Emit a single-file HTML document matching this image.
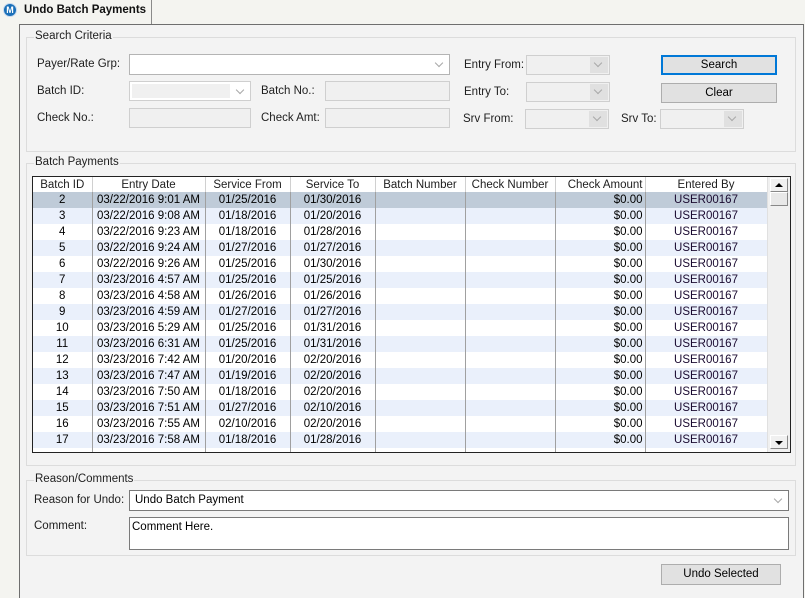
<!DOCTYPE html>
<html><head><style>
*{box-sizing:border-box;margin:0;padding:0}
body{width:805px;height:598px;background:#f4f4f0;font-family:"Liberation Sans",sans-serif;font-size:11.5px;color:#000;position:relative;overflow:hidden}
.a{position:absolute}
.panel{left:19px;top:24px;width:785px;height:574px;border:1px solid #6e6e6e;border-bottom:none;background:#f3f3f3}
.grp{border:1px solid #dcdcdc}
.gl{position:absolute;top:-8px;left:7px;background:#f3f3f3;padding:0 1px;color:#1e1e1e}
.lbl{color:#1e1e1e}
.inp{background:#fff;border:1px solid #b4b4b4}
.dis{background:#f0f0f0;border:1px solid #cfcfcf}
.dd{position:absolute;right:1px;top:1px;bottom:1px;width:18px;background:#e0e0e0}
.dd::after,.chev::after{content:"";position:absolute;left:5px;top:3px;width:5px;height:5px;border-right:1px solid #a8a8a8;border-bottom:1px solid #a8a8a8;transform:rotate(45deg)}
.chev{position:absolute;right:2px;top:2px;width:16px;height:14px}
.btn{background:#e1e1e1;border:1px solid #adadad;text-align:center;line-height:19px}
table{border-collapse:collapse;font-size:11.5px;table-layout:fixed}
td,th{height:16px;padding:1px 2px 0;border-right:1px solid #a0a0a0;white-space:nowrap;overflow:hidden;font-weight:normal;text-align:center;line-height:15px}
th{background:#fff;color:#1e1e1e;height:15px;border-right:1px solid #d0d0d0;line-height:14px}
tr.b td{background:#eaf0fb}
tr.w td{background:#fff}
tr.s td{background:#bfcbd8}
td.r{text-align:right}
td.u{color:#1a0a30}
</style></head><body>
<div class="a" style="left:0;top:0;width:152px;height:24px;background:#f4f4f0;border-right:1px solid #8a8a8a"></div>
<div class="a" style="left:3px;top:3px;width:14px;height:14px;border-radius:50%;background:#1a6fb8;border:1px solid #c7d9ee;color:#fff;font-size:9px;font-weight:bold;text-align:center;line-height:12px">M</div>
<div class="a" style="left:24px;top:4px;font-weight:bold;font-size:11.5px;color:#111">Undo Batch Payments</div>
<div class="a panel"></div>
<div class="a grp" style="left:26px;top:37px;width:770px;height:115px"><span class="gl">Search Criteria</span></div>
<div class="a lbl" style="left:37px;top:58px">Payer/Rate Grp:</div>
<div class="a inp" style="left:129px;top:54px;width:321px;height:21px"><span class="chev"></span></div>
<div class="a lbl" style="left:37px;top:85px">Batch ID:</div>
<div class="a dis" style="left:129px;top:81px;width:122px;height:20px;background:#fff"><div style="position:absolute;left:2px;top:2px;right:20px;bottom:2px;background:#f0f0f0"></div><span class="chev"></span></div>
<div class="a lbl" style="left:261px;top:85px">Batch No.:</div>
<div class="a dis" style="left:325px;top:81px;width:125px;height:20px"></div>
<div class="a lbl" style="left:37px;top:112px">Check No.:</div>
<div class="a dis" style="left:129px;top:108px;width:122px;height:20px"></div>
<div class="a lbl" style="left:261px;top:112px">Check Amt:</div>
<div class="a dis" style="left:325px;top:108px;width:125px;height:20px"></div>
<div class="a lbl" style="left:464px;top:59px">Entry From:</div>
<div class="a dis" style="left:526px;top:55px;width:84px;height:20px"><span class="dd"></span></div>
<div class="a lbl" style="left:464px;top:86px">Entry To:</div>
<div class="a dis" style="left:526px;top:82px;width:84px;height:20px"><span class="dd"></span></div>
<div class="a lbl" style="left:463px;top:113px">Srv From:</div>
<div class="a dis" style="left:525px;top:109px;width:84px;height:20px"><span class="dd"></span></div>
<div class="a lbl" style="left:621px;top:113px">Srv To:</div>
<div class="a dis" style="left:660px;top:109px;width:84px;height:20px"><span class="dd"></span></div>
<div class="a btn" style="left:661px;top:55px;width:116px;height:20px;border:2px solid #0078d7;line-height:17px">Search</div>
<div class="a btn" style="left:661px;top:83px;width:116px;height:20px">Clear</div>
<div class="a grp" style="left:26px;top:163px;width:770px;height:303px"><span class="gl">Batch Payments</span></div>
<div class="a" style="left:32px;top:176px;width:759px;height:277px;border:1px solid #222;background:#fff;overflow:hidden">
<table style="width:734px">
<colgroup><col style="width:59px"><col style="width:113px"><col style="width:85px"><col style="width:85px"><col style="width:90px"><col style="width:90px"><col style="width:90px"><col style="width:122px"></colgroup>
<tr><th>Batch ID</th><th>Entry Date</th><th>Service From</th><th>Service To</th><th>Batch Number</th><th>Check Number</th><th style="text-align:right">Check Amount</th><th>Entered By</th></tr>
<tr class="s"><td>2</td><td>03/22/2016 9:01 AM</td><td>01/25/2016</td><td>01/30/2016</td><td></td><td></td><td class="r">$0.00</td><td class="u">USER00167</td></tr>
<tr class="b"><td>3</td><td>03/22/2016 9:08 AM</td><td>01/18/2016</td><td>01/20/2016</td><td></td><td></td><td class="r">$0.00</td><td class="u">USER00167</td></tr>
<tr class="w"><td>4</td><td>03/22/2016 9:23 AM</td><td>01/18/2016</td><td>01/28/2016</td><td></td><td></td><td class="r">$0.00</td><td class="u">USER00167</td></tr>
<tr class="b"><td>5</td><td>03/22/2016 9:24 AM</td><td>01/27/2016</td><td>01/27/2016</td><td></td><td></td><td class="r">$0.00</td><td class="u">USER00167</td></tr>
<tr class="w"><td>6</td><td>03/22/2016 9:26 AM</td><td>01/25/2016</td><td>01/30/2016</td><td></td><td></td><td class="r">$0.00</td><td class="u">USER00167</td></tr>
<tr class="b"><td>7</td><td>03/23/2016 4:57 AM</td><td>01/25/2016</td><td>01/25/2016</td><td></td><td></td><td class="r">$0.00</td><td class="u">USER00167</td></tr>
<tr class="w"><td>8</td><td>03/23/2016 4:58 AM</td><td>01/26/2016</td><td>01/26/2016</td><td></td><td></td><td class="r">$0.00</td><td class="u">USER00167</td></tr>
<tr class="b"><td>9</td><td>03/23/2016 4:59 AM</td><td>01/27/2016</td><td>01/27/2016</td><td></td><td></td><td class="r">$0.00</td><td class="u">USER00167</td></tr>
<tr class="w"><td>10</td><td>03/23/2016 5:29 AM</td><td>01/25/2016</td><td>01/31/2016</td><td></td><td></td><td class="r">$0.00</td><td class="u">USER00167</td></tr>
<tr class="b"><td>11</td><td>03/23/2016 6:31 AM</td><td>01/25/2016</td><td>01/31/2016</td><td></td><td></td><td class="r">$0.00</td><td class="u">USER00167</td></tr>
<tr class="w"><td>12</td><td>03/23/2016 7:42 AM</td><td>01/20/2016</td><td>02/20/2016</td><td></td><td></td><td class="r">$0.00</td><td class="u">USER00167</td></tr>
<tr class="b"><td>13</td><td>03/23/2016 7:47 AM</td><td>01/19/2016</td><td>02/20/2016</td><td></td><td></td><td class="r">$0.00</td><td class="u">USER00167</td></tr>
<tr class="w"><td>14</td><td>03/23/2016 7:50 AM</td><td>01/18/2016</td><td>02/20/2016</td><td></td><td></td><td class="r">$0.00</td><td class="u">USER00167</td></tr>
<tr class="b"><td>15</td><td>03/23/2016 7:51 AM</td><td>01/27/2016</td><td>02/10/2016</td><td></td><td></td><td class="r">$0.00</td><td class="u">USER00167</td></tr>
<tr class="w"><td>16</td><td>03/23/2016 7:55 AM</td><td>02/10/2016</td><td>02/20/2016</td><td></td><td></td><td class="r">$0.00</td><td class="u">USER00167</td></tr>
<tr class="b"><td>17</td><td>03/23/2016 7:58 AM</td><td>01/18/2016</td><td>01/28/2016</td><td></td><td></td><td class="r">$0.00</td><td class="u">USER00167</td></tr>
<tr class="w"><td></td><td></td><td></td><td></td><td></td><td></td><td></td><td></td></tr>
</table>
<div class="a" style="left:734px;top:0;width:23px;height:275px;background:#f0f0f0;border-left:1px solid #e0e0e0">
<div class="a" style="left:2px;top:1px;width:18px;height:14px;background:#f0f0f0;border:1px solid #fff;border-right-color:#888;border-bottom-color:#888"><div style="margin:4px auto 0;width:0;height:0;border-left:4px solid transparent;border-right:4px solid transparent;border-bottom:4px solid #000"></div></div>
<div class="a" style="left:2px;top:15px;width:18px;height:14px;background:#e8e8e8;border:1px solid #fff;border-right-color:#888;border-bottom-color:#888"></div>
<div class="a" style="left:2px;top:258px;width:18px;height:14px;background:#f0f0f0;border:1px solid #fff;border-right-color:#888;border-bottom-color:#888"><div style="margin:5px auto 0;width:0;height:0;border-left:4px solid transparent;border-right:4px solid transparent;border-top:4px solid #000"></div></div>
</div>
</div>
<div class="a grp" style="left:26px;top:480px;width:770px;height:76px"><span class="gl">Reason/Comments</span></div>
<div class="a lbl" style="left:34px;top:494px">Reason for Undo:</div>
<div class="a inp" style="left:129px;top:490px;width:660px;height:21px;border-color:#7a7a7a"><span style="position:absolute;left:5px;top:3px">Undo Batch Payment</span><span class="chev"></span></div>
<div class="a lbl" style="left:34px;top:520px">Comment:</div>
<div class="a inp" style="left:129px;top:517px;width:660px;height:33px;border-color:#7a7a7a"><span style="position:absolute;left:2px;top:3px">Comment Here.</span></div>
<div class="a btn" style="left:661px;top:564px;width:120px;height:21px">Undo Selected</div>
</body></html>
